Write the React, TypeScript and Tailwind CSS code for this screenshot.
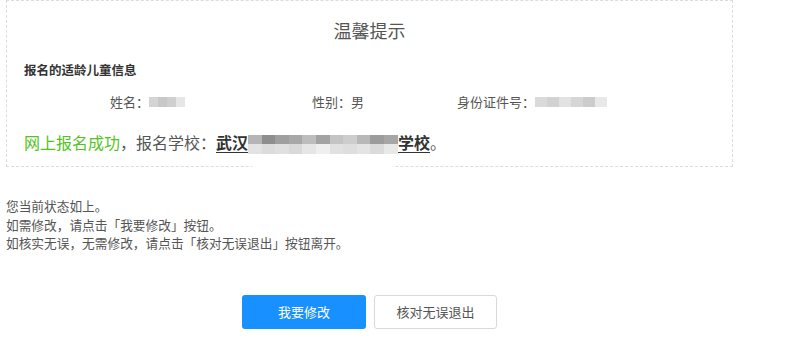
// Enrollment confirmation notice — dashed info box, status text, two actions
const nameBlur = ["#d4d4d4", "#c8c8c8", "#cfcfcf", "#e6e6e6"];
const idBlur = ["#dadada", "#d2d2d2", "#e2e2e2", "#d6d6d6", "#cccccc", "#e8e8e8"];
const schoolTop = ["#b5b5b5", "#8e8e8e", "#9f9f9f", "#a8a8a8", "#bdbdbd", "#a3a3a3", "#c4c4c4", "#cdcdcd", "#b8b8b8", "#9c9c9c", "#a6a6a6"];
const schoolBottom = ["#e3e3e3", "#dcdcdc", "#e0e0e0", "#d9d9d9", "#e6e6e6", "#efefef", "#e1e1e1", "#dedede", "#e4e4e4", "#dbdbdb", "#e8e8e8"];

function Mosaic({ colors, w, h }: { colors: string[]; w: number; h: number }) {
  return (
    <span className="inline-flex align-middle blur-[0.6px]">
      {colors.map((c, i) => (
        <span key={i} className="inline-block" style={{ background: c, width: w, height: h }} />
      ))}
    </span>
  );
}

export default function App() {
  return (
    <main className="min-h-[345px] bg-white font-['Noto_Sans_CJK_SC','Microsoft_YaHei',sans-serif] text-[#555]">
      <div className="ml-[6px] w-[727px]">
        {/* Notice box */}
        <section className="border border-dashed border-[#dcdcdc] pt-[17px] pb-[12px]">
          <h1 className="text-center text-[18px] leading-[24px] text-[#555]">温馨提示</h1>

          <h2 className="mt-[18px] pl-[17px] text-[12.5px] font-bold leading-[20px] text-[#333]">
            报名的适龄儿童信息
          </h2>

          <div className="mt-[12px] flex pl-[103px] text-[13px] leading-[20px]">
            <span className="flex w-[202px] items-center">
              姓名：<Mosaic colors={nameBlur} w={9} h={10} />
            </span>
            <span className="w-[145px]">性别：男</span>
            <span className="flex items-center">
              身份证件号：<Mosaic colors={idBlur} w={12} h={10} />
            </span>
          </div>

          <p className="relative z-0 mt-[18px] pl-[17px] text-[16px] leading-[24px]">
            <span className="text-[#52c41a]">网上报名成功</span>
            ，报名学校：
            <span className="font-bold text-[#333] underline underline-offset-[3px]">武汉</span>
            <span className="relative inline-flex w-[150px] flex-col align-middle">
              <span className="absolute -top-[10px] -bottom-[22px] left-[4px] right-[4px] -z-10 rounded-[12px] bg-white blur-[2px]" />
              <Mosaic colors={schoolTop} w={13.6} h={9} />
              <Mosaic colors={schoolBottom} w={13.6} h={10} />
            </span>
            <span className="font-bold text-[#333] underline underline-offset-[3px]">学校</span>。
          </p>
        </section>

        {/* Status text */}
        <div className="mt-[30px] text-[12.7px] leading-[18.5px] text-[#555]">
          <p>您当前状态如上。</p>
          <p>如需修改，请点击「我要修改」按钮。</p>
          <p>如核实无误，无需修改，请点击「核对无误退出」按钮离开。</p>
        </div>

        {/* Actions */}
        <div className="mt-[42px] flex justify-center gap-[8px]">
          <button className="h-[34px] w-[124px] rounded-[3px] bg-[#1890ff] text-[13px] text-white">
            我要修改
          </button>
          <button className="h-[34px] w-[123px] rounded-[3px] border border-[#d9d9d9] bg-white text-[13px] text-[#555]">
            核对无误退出
          </button>
        </div>
      </div>
    </main>
  );
}
